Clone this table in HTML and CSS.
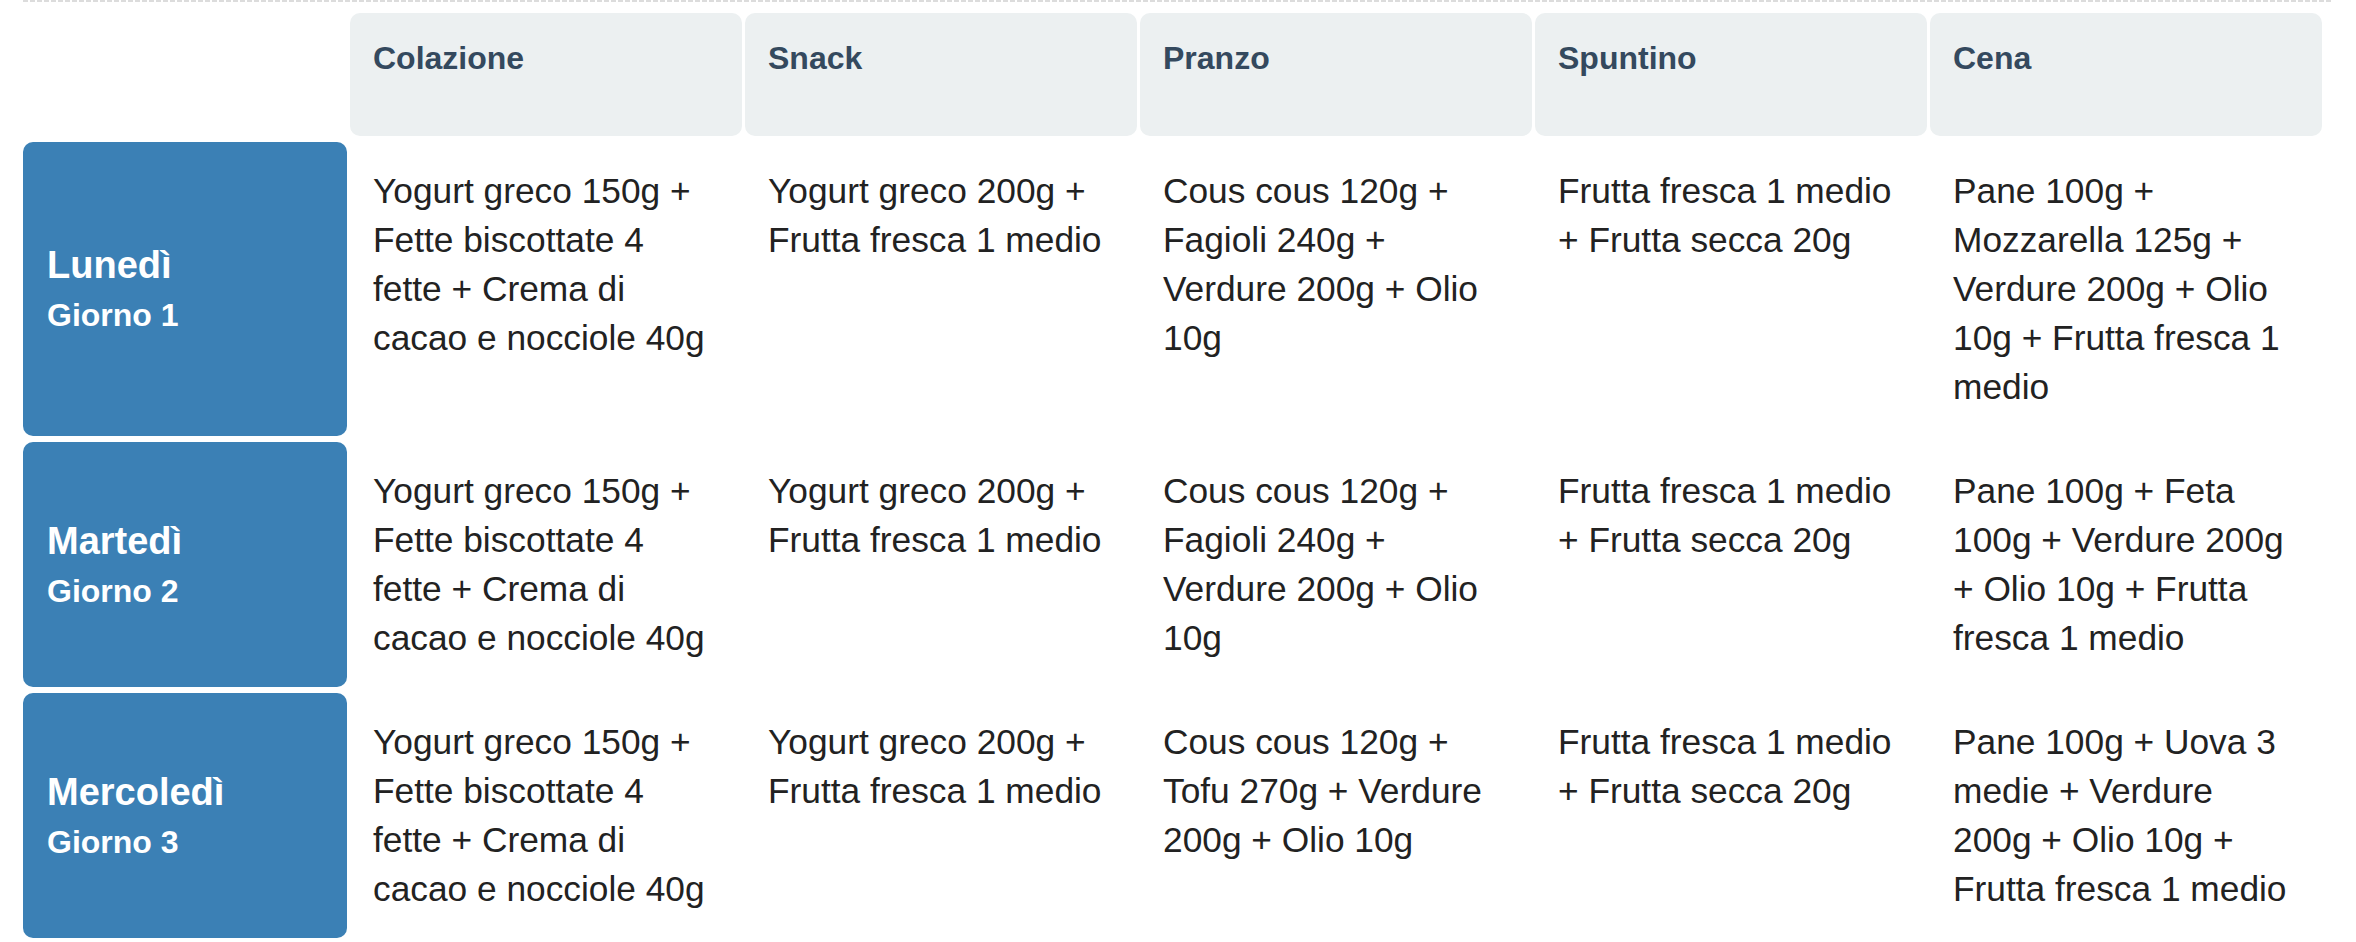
FILE: index.html
```html
<!DOCTYPE html>
<html lang="it">
<head>
<meta charset="utf-8">
<title>Piano pasti</title>
<link rel="stylesheet" href="styles.css">
</head>
<body>
<div class="page">
  <div class="dash"></div>
  <div class="plan">
    <div class="corner"></div>
    <div class="meal-head">Colazione</div>
    <div class="meal-head">Snack</div>
    <div class="meal-head">Pranzo</div>
    <div class="meal-head">Spuntino</div>
    <div class="meal-head">Cena</div>

    <div class="day"><div class="day-name">Lunedì</div><div class="day-sub">Giorno 1</div></div>
    <div class="cell">Yogurt greco 150g + Fette biscottate 4 fette + Crema di cacao e nocciole 40g</div>
    <div class="cell">Yogurt greco 200g + Frutta fresca 1 medio</div>
    <div class="cell">Cous cous 120g + Fagioli 240g + Verdure 200g + Olio 10g</div>
    <div class="cell">Frutta fresca 1 medio + Frutta secca 20g</div>
    <div class="cell">Pane 100g + Mozzarella 125g + Verdure 200g + Olio 10g + Frutta fresca 1 medio</div>

    <div class="day"><div class="day-name">Martedì</div><div class="day-sub">Giorno 2</div></div>
    <div class="cell">Yogurt greco 150g + Fette biscottate 4 fette + Crema di cacao e nocciole 40g</div>
    <div class="cell">Yogurt greco 200g + Frutta fresca 1 medio</div>
    <div class="cell">Cous cous 120g + Fagioli 240g + Verdure 200g + Olio 10g</div>
    <div class="cell">Frutta fresca 1 medio + Frutta secca 20g</div>
    <div class="cell">Pane 100g + Feta 100g + Verdure 200g + Olio 10g + Frutta fresca 1 medio</div>

    <div class="day"><div class="day-name">Mercoledì</div><div class="day-sub">Giorno 3</div></div>
    <div class="cell">Yogurt greco 150g + Fette biscottate 4 fette + Crema di cacao e nocciole 40g</div>
    <div class="cell">Yogurt greco 200g + Frutta fresca 1 medio</div>
    <div class="cell">Cous cous 120g + Tofu 270g + Verdure 200g + Olio 10g</div>
    <div class="cell">Frutta fresca 1 medio + Frutta secca 20g</div>
    <div class="cell">Pane 100g + Uova 3 medie + Verdure 200g + Olio 10g + Frutta fresca 1 medio</div>
  </div>
</div>
</body>
</html>
```
FILE: styles.css
```css
html, body {
  margin: 0;
  padding: 0;
  background: #ffffff;
}

body {
  font-family: "Liberation Sans", Arial, Helvetica, sans-serif;
  color: #222222;
}

.page {
  padding-left: 23px;
  width: 2310px;
}

.dash {
  height: 2px;
  background: repeating-linear-gradient(to right, #dcdcdc 0, #dcdcdc 5px, transparent 5px, transparent 7px);
}

.plan {
  margin-top: 11px;
  display: grid;
  grid-template-columns: 324px repeat(5, 392px);
  column-gap: 3px;
  row-gap: 6px;
}

.meal-head {
  box-sizing: border-box;
  height: 123px;
  padding: 27px 23px 0 23px;
  background: #ecf0f1;
  border-radius: 10px;
  color: #34495e;
  font-weight: bold;
  font-size: 32px;
  line-height: 36px;
}

.day {
  background: #3b80b5;
  border-radius: 10px;
  color: #ffffff;
  font-weight: bold;
  padding: 0 24px;
  display: flex;
  flex-direction: column;
  justify-content: center;
}

.day-name {
  font-size: 38px;
  line-height: 52px;
}

.day-sub {
  font-size: 32px;
  line-height: 48px;
}

.cell {
  box-sizing: border-box;
  padding: 24px 26px 25px 23px;
  font-size: 35.3px;
  line-height: 49px;
}
```
